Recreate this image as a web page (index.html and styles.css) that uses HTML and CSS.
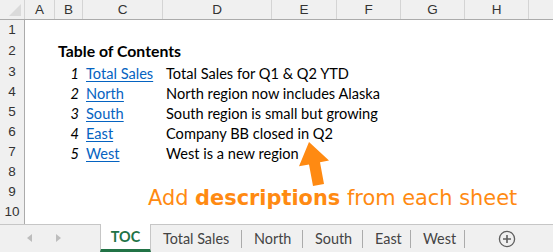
FILE: index.html
```html
<!DOCTYPE html>
<html>
<head>
<meta charset="utf-8">
<link rel="stylesheet" href="styles.css">
</head>
<body>
<div class="app">
  <div class="sheet">
    <div class="row colhdr">
      <div class="corner"><span class="tri"></span></div>
      <div class="ch">A</div><div class="ch">B</div><div class="ch">C</div><div class="ch">D</div>
      <div class="ch">E</div><div class="ch">F</div><div class="ch">G</div><div class="ch">H</div><div class="ch last"></div>
    </div>
    <div class="row"><div class="rh">1</div></div>
    <div class="row r2"><div class="rh">2</div><div class="cell title">Table of Contents</div></div>
    <div class="row"><div class="rh">3</div><div class="cell num">1</div><div class="cell link">Total Sales</div><div class="cell desc">Total Sales for Q1 &amp; Q2 YTD</div></div>
    <div class="row"><div class="rh">4</div><div class="cell num">2</div><div class="cell link">North</div><div class="cell desc">North region now includes Alaska</div></div>
    <div class="row"><div class="rh">5</div><div class="cell num">3</div><div class="cell link">South</div><div class="cell desc">South region is small but growing</div></div>
    <div class="row"><div class="rh">6</div><div class="cell num">4</div><div class="cell link">East</div><div class="cell desc">Company BB closed in Q2</div></div>
    <div class="row"><div class="rh">7</div><div class="cell num">5</div><div class="cell link">West</div><div class="cell desc">West is a new region</div></div>
    <div class="row"><div class="rh">8</div></div>
    <div class="row"><div class="rh">9</div></div>
    <div class="row"><div class="rh">10</div></div>
    <div class="row"><div class="rh"></div></div>

    <div class="note">Add <b>descriptions</b> from each sheet</div>
    <svg class="arrow" width="553" height="224" viewBox="0 0 553 224">
      <polygon fill="#ff8a12" points="309,142 329,160.5 320,162.3 324,184 313,186.1 309,164.5 299,166.3"/>
    </svg>
  </div>
  <div class="tabbar">
    <div class="nav">
      <svg width="100" height="28" viewBox="0 0 100 28"><polygon points="32,9 32,17 27,13" fill="#bdbdbd"/><polygon points="56,9 56,17 61,13" fill="#bdbdbd"/></svg>
    </div>
    <div class="tab active">TOC</div>
    <div class="tab t1">Total Sales</div>
    <div class="tab t2">North</div>
    <div class="tab t3">South</div>
    <div class="tab t4">East</div>
    <div class="tab t5">West</div>
    <div class="plus">
      <svg width="18" height="18" viewBox="0 0 18 18"><circle cx="9" cy="9" r="7.6" fill="none" stroke="#5f5f5f" stroke-width="1.3"/><path d="M9 5v8M5 9h8" stroke="#5f5f5f" stroke-width="1.6"/></svg>
    </div>
  </div>
</div>
</body>
</html>
```

FILE: styles.css
```css
* { box-sizing: border-box; margin: 0; padding: 0; }
body { width: 553px; height: 252px; overflow: hidden; background: #fff; font-family: "Lato", "Open Sans", sans-serif; }
.app { width: 553px; height: 252px; display: flex; flex-direction: column; }
.sheet { position: relative; height: 224px; overflow: hidden; display: flex; flex-direction: column; }
.row {
  display: grid;
  grid-template-columns: 25px 30px 28px 80px 109px 65px 64px 64px 64px 24px;
  height: 20px; flex: none;
}
.r2 { height: 22px; }
.colhdr { height: 20px; background: #f0f0f0; border-bottom: 1px solid #ababab; }
.corner { position: relative; border-right: 1px solid #d4d4d4; }
.tri { position: absolute; right: 3px; bottom: 3px; width: 0; height: 0; border-left: 12px solid transparent; border-bottom: 12px solid #dadada; }
.ch { border-right: 1px solid #d4d4d4; font-family: "Liberation Sans", sans-serif; font-size: 13.5px; color: #333; text-align: center; line-height: 19px; }
.ch.last { border-right: none; }
.rh { background: #f0f0f0; border-right: 1px solid #ababab; border-bottom: 1px solid #d4d4d4; font-family: "Liberation Sans", sans-serif; font-size: 13.5px; color: #333; text-align: center; line-height: 20px; }
.r2 .rh { line-height: 22px; }
.cell { font-size: 14.6px; color: #000; line-height: 18px; align-self: end; white-space: nowrap; }
.title { grid-column: 3 / 6; font-weight: 700; padding-left: 3px; font-size: 15.8px; margin-bottom: 3px; }
.num { grid-column: 3; text-align: right; font-style: italic; padding-right: 4px; }
.link { grid-column: 4; color: #0563c1; padding-left: 3px; }
.link { text-decoration: underline; text-underline-offset: 2px; }
.desc { grid-column: 5 / 10; padding-left: 3px; }
.note { position: absolute; left: 148px; top: 186px; font-family: "DejaVu Sans", sans-serif; font-size: 20.9px; color: #ff8a12; white-space: nowrap; }
.note b { font-weight: 700; }
.arrow { position: absolute; left: 0; top: 0; }
.tabbar { height: 28px; background: #f0f0f0; border-top: 1px solid #c6c6c6; display: flex; align-items: stretch; font-family: "Lato", sans-serif; font-size: 14.4px; color: #444; white-space: nowrap; }
.nav { width: 100px; flex: none; }
.nav svg { display: block; }
.tab { display: flex; align-items: center; padding: 0 0 0 12px; position: relative; flex: none; }
.tab::after { content: ""; position: absolute; right: 0; top: 5px; bottom: 4px; width: 1px; background: #ababab; }
.tab.active { background: #fff; color: #217346; font-weight: 700; width: 51px; padding: 0; justify-content: center; margin-top: -1px; border-left: 1px solid #c6c6c6; border-right: 1px solid #c6c6c6; border-bottom: 3px solid #217346; }
.tab.active::after { display: none; }
.t1 { width: 91px; }
.t2 { width: 61px; }
.t3 { width: 60px; }
.t4 { width: 48px; }
.t5 { width: 54px; }
.plus { flex: 1; display: flex; align-items: center; justify-content: center; padding-right: 4px; }
.plus svg { display: block; }
```
